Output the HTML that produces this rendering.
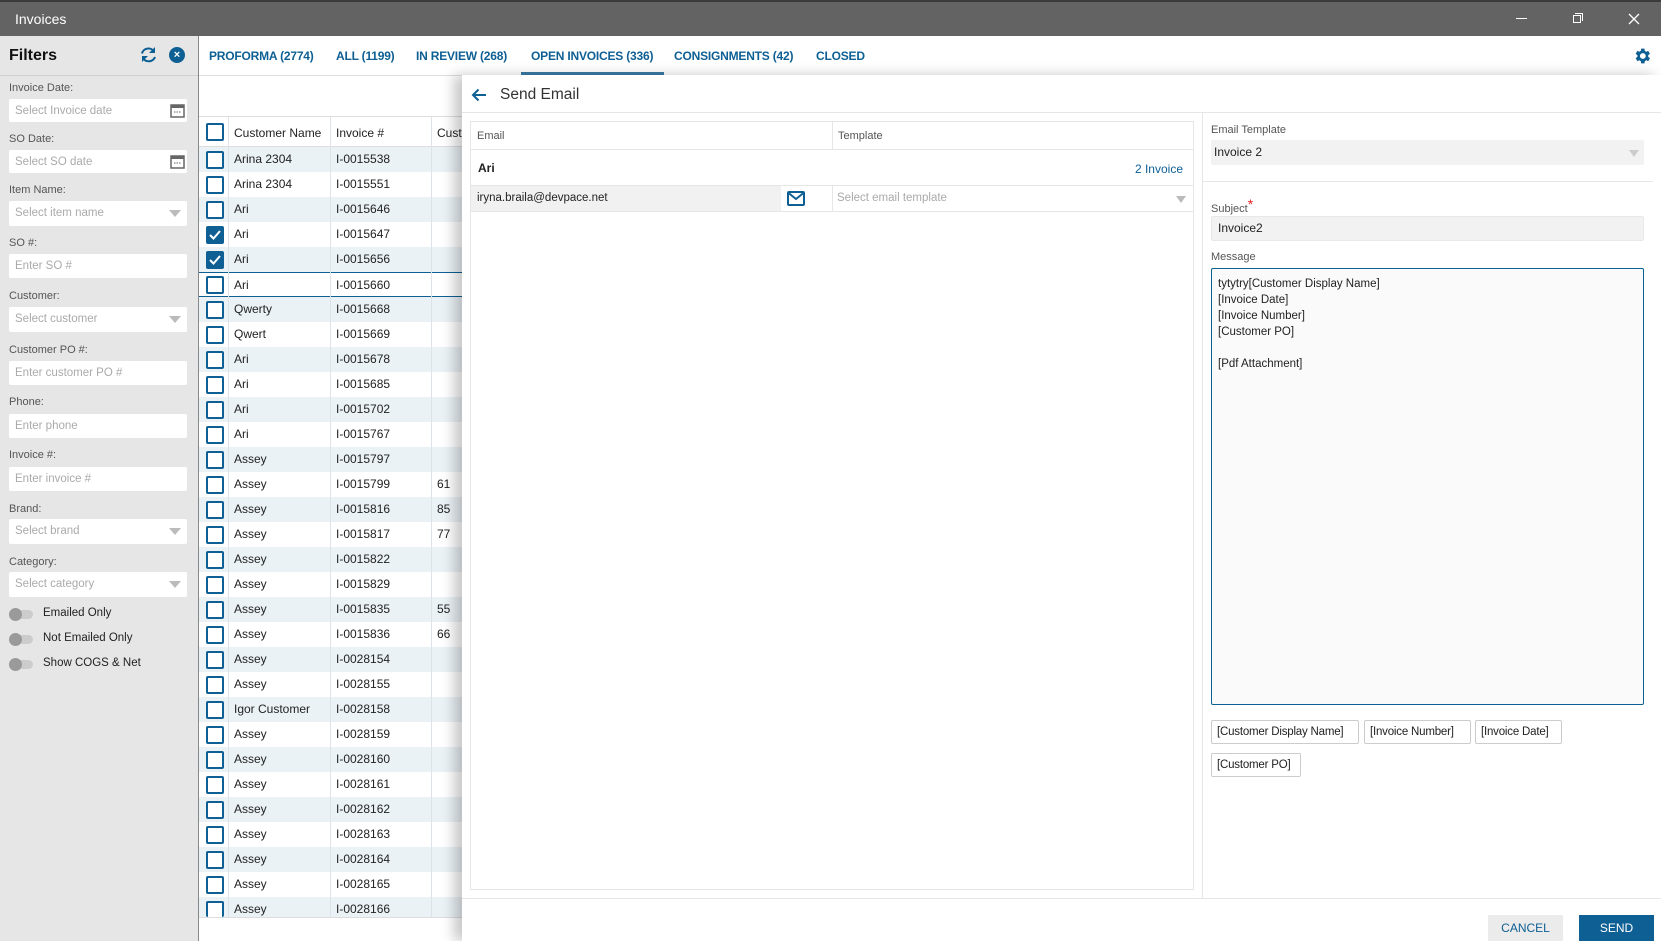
<!DOCTYPE html>
<html><head><meta charset="utf-8"><style>
*{box-sizing:border-box;margin:0;padding:0}
body{width:1661px;height:941px;position:relative;overflow:hidden;background:#fff;font-family:"Liberation Sans",sans-serif;font-size:12px;color:#222}
.a{position:absolute}
.lbl{position:absolute;left:9px;font-size:11px;color:#555}
.inp{position:absolute;left:9px;width:178px;height:24px;background:#fff;border-radius:2px;color:#aaa;font-size:11.5px;line-height:24px;padding-left:6px}
.dd:after{content:"";position:absolute;right:6px;top:9px;border-left:6px solid transparent;border-right:6px solid transparent;border-top:7px solid #bbb}
.tab{position:absolute;top:49px;font-size:12px;font-weight:bold;color:#0e5f93;white-space:nowrap;letter-spacing:-0.2px}
.row{position:absolute;left:199px;width:263px;height:25px;line-height:25px}
.row span{position:absolute}
.cb{position:absolute;left:206px;width:18px;height:18px;border:2px solid #0e5f93;border-radius:2px;background:#fff}
.cb.on{background:#0e5f93}
.tg{position:absolute;left:9px;width:24px;height:9px;border-radius:5px;background:#ccc}
.tg:before{content:"";position:absolute;left:0;top:-2px;width:13px;height:13px;border-radius:50%;background:#9a9a9a}
.tgl{position:absolute;left:43px;font-size:11.5px;color:#222}
.chip{position:absolute;height:24px;border:1px solid #ccc;border-radius:2px;line-height:22px;padding:0 5px;font-size:11.5px;background:#fff;white-space:nowrap;overflow:hidden;letter-spacing:-0.2px}
</style></head><body>
<div class="a" style="left:0;top:0;width:1661px;height:36px;background:#636363;border-top:2px solid #3a3a3a"></div>
<div class="a" style="left:15px;top:11px;color:#fff;font-size:14px">Invoices</div>
<div class="a" style="left:1516px;top:18px;width:11px;height:1px;background:#fff"></div>
<div class="a" style="left:1573px;top:15px;width:8px;height:8px;border:1px solid #fff"></div>
<div class="a" style="left:1575px;top:13px;width:8px;height:8px;border-top:1px solid #fff;border-right:1px solid #fff"></div>
<svg class="a" style="left:1628px;top:13px" width="12" height="12"><path d="M1 1L11 11M11 1L1 11" stroke="#fff" stroke-width="1.3"/></svg>

<div class="a" style="left:0;top:36px;width:199px;height:905px;background:#e6e6e6;border-right:1px solid #888"></div>
<div class="a" style="left:0;top:75px;width:198px;height:1px;background:#d0d0d0"></div>
<div class="a" style="left:9px;top:47px;font-size:16px;font-weight:bold;color:#111">Filters</div>
<svg class="a" style="left:139px;top:46px" width="19" height="17" viewBox="0 0 19 17"><path d="M3 7.5A6.5 6 0 0 1 15 5.5" fill="none" stroke="#0e5f93" stroke-width="2"/><path d="M16 11A6.5 6 0 0 1 4 12" fill="none" stroke="#0e5f93" stroke-width="2"/><path d="M16 1v6h-6z" fill="#0e5f93"/><path d="M3 16v-6h6z" fill="#0e5f93"/></svg>
<div class="a" style="left:169px;top:47px;width:16px;height:16px;border-radius:50%;background:#0e5f93;color:#fff;font-size:11px;line-height:16px;text-align:center;font-weight:bold">×</div>

<div class="lbl" style="top:82px">Invoice Date:</div>
<div class="inp" style="top:99px;height:23px">Select Invoice date</div>
<div class="lbl" style="top:133px">SO Date:</div>
<div class="inp" style="top:150px;height:23px">Select SO date</div>
<svg class="a" style="left:170px;top:103px" width="15" height="15"><rect x="1" y="2" width="13" height="12" fill="none" stroke="#666" stroke-width="1.5"/><rect x="1" y="2" width="13" height="3" fill="#666"/><path d="M4 9h7" stroke="#666" stroke-dasharray="1.5 1"/></svg>
<svg class="a" style="left:170px;top:154px" width="15" height="15"><rect x="1" y="2" width="13" height="12" fill="none" stroke="#666" stroke-width="1.5"/><rect x="1" y="2" width="13" height="3" fill="#666"/><path d="M4 9h7" stroke="#666" stroke-dasharray="1.5 1"/></svg>
<div class="lbl" style="top:184px">Item Name:</div>
<div class="inp dd" style="top:201px;height:25px;line-height:25px">Select item name</div>
<div class="lbl" style="top:237px">SO #:</div>
<div class="inp" style="top:254px">Enter SO #</div>
<div class="lbl" style="top:290px">Customer:</div>
<div class="inp dd" style="top:307px;height:25px;line-height:25px">Select customer</div>
<div class="lbl" style="top:344px">Customer PO #:</div>
<div class="inp" style="top:361px">Enter customer PO #</div>
<div class="lbl" style="top:396px">Phone:</div>
<div class="inp" style="top:414px">Enter phone</div>
<div class="lbl" style="top:449px">Invoice #:</div>
<div class="inp" style="top:467px">Enter invoice #</div>
<div class="lbl" style="top:503px">Brand:</div>
<div class="inp dd" style="top:519px;height:25px;line-height:25px">Select brand</div>
<div class="lbl" style="top:556px">Category:</div>
<div class="inp dd" style="top:572px;height:25px;line-height:25px">Select category</div>
<div class="tg" style="top:610px"></div><div class="tgl" style="top:607px">Emailed Only</div>
<div class="tg" style="top:635px"></div><div class="tgl" style="top:632px">Not Emailed Only</div>
<div class="tg" style="top:660px"></div><div class="tgl" style="top:657px">Show COGS &amp; Net</div>

<div class="tab" style="left:209px">PROFORMA (2774)</div>
<div class="tab" style="left:336px">ALL (1199)</div>
<div class="tab" style="left:416px">IN REVIEW (268)</div>
<div class="tab" style="left:531px">OPEN INVOICES (336)</div>
<div class="tab" style="left:674px">CONSIGNMENTS (42)</div>
<div class="tab" style="left:816px">CLOSED</div>
<div class="a" style="left:521px;top:72px;width:143px;height:3px;background:#3a7aa5"></div>
<div class="a" style="left:199px;top:75px;width:1462px;height:1px;background:#ddd"></div>
<svg class="a" style="left:1632px;top:46px" width="20" height="20" viewBox="0 0 24 24"><path fill="#0e5f93" d="M19.4 13a7.5 7.5 0 0 0 0-2l2.1-1.6-2-3.5-2.5 1a7.6 7.6 0 0 0-1.7-1L15 3.2h-4l-.4 2.7a7.6 7.6 0 0 0-1.7 1l-2.5-1-2 3.5L6.5 11a7.5 7.5 0 0 0 0 2l-2.1 1.6 2 3.5 2.5-1a7.6 7.6 0 0 0 1.7 1l.4 2.7h4l.4-2.7a7.6 7.6 0 0 0 1.7-1l2.5 1 2-3.5zM13 15.5a3.5 3.5 0 1 1 0-7 3.5 3.5 0 0 1 0 7z"/></svg>

<div class="a" style="left:199px;top:116px;width:263px;height:1px;background:#ddd"></div>
<div class="a" style="left:199px;top:117px;width:263px;height:30px;background:#fff;border-bottom:1px solid #ddd"></div>
<div class="cb" style="top:123px"></div>
<div class="a" style="left:234px;top:126px">Customer Name</div>
<div class="a" style="left:336px;top:126px">Invoice #</div>
<div class="a" style="left:437px;top:126px">Cust</div>
<div id="rows"></div>
<div class="a" style="left:228px;top:117px;width:1px;height:800px;background:#dde3e8"></div>
<div class="a" style="left:330px;top:117px;width:1px;height:800px;background:#dde3e8"></div>
<div class="a" style="left:431px;top:117px;width:1px;height:800px;background:#dde3e8"></div>
<div class="a" style="left:199px;top:917px;width:263px;height:1px;background:#ddd"></div>
<script>
var d=[["Arina 2304","I-0015538"],["Arina 2304","I-0015551"],["Ari","I-0015646"],["Ari","I-0015647"],["Ari","I-0015656"],["Ari","I-0015660"],["Qwerty","I-0015668"],["Qwert","I-0015669"],["Ari","I-0015678"],["Ari","I-0015685"],["Ari","I-0015702"],["Ari","I-0015767"],["Assey","I-0015797"],["Assey","I-0015799","61"],["Assey","I-0015816","85"],["Assey","I-0015817","77"],["Assey","I-0015822"],["Assey","I-0015829"],["Assey","I-0015835","55"],["Assey","I-0015836","66"],["Assey","I-0028154"],["Assey","I-0028155"],["Igor Customer","I-0028158"],["Assey","I-0028159"],["Assey","I-0028160"],["Assey","I-0028161"],["Assey","I-0028162"],["Assey","I-0028163"],["Assey","I-0028164"],["Assey","I-0028165"],["Assey","I-0028166"]];
var h="";
d.forEach(function(r,i){var t=147+i*25;var hgt=Math.min(25,917-t);
var bg=i%2==0?"#ebf2f6":"#fff";var bd=i==5?"border-top:1px solid #0e5f93;border-bottom:1px solid #0e5f93;":"";
h+='<div class="row" style="top:'+t+'px;height:'+hgt+'px;overflow:hidden;background:'+bg+';'+bd+'"><span style="left:35px">'+r[0]+'</span><span style="left:137px">'+r[1]+'</span>'+(r[2]?'<span style="left:238px">'+r[2]+'</span>':'')+'</div>';
if(t+4<917)h+='<div class="cb'+((i==3||i==4)?' on':'')+'" style="top:'+(t+4)+'px;height:'+Math.min(18,913-t)+'px'+(t+22>917?';border-bottom:none':'')+'">'+((i==3||i==4)?'<svg width="14" height="14" style="position:absolute;left:0;top:0"><path d="M2 7l3.5 3.5L12 3" stroke="#fff" stroke-width="2" fill="none"/></svg>':'')+'</div>';});
document.getElementById("rows").innerHTML=h;
</script>

<div class="a" style="left:462px;top:75px;width:1199px;height:866px;background:#fff;box-shadow:-8px 0 12px rgba(0,0,0,.22)"></div>
<svg class="a" style="left:471px;top:88px" width="16" height="14"><path d="M15 7H2M7.5 1.5L2 7l5.5 5.5" stroke="#0e5f93" stroke-width="2" fill="none"/></svg>
<div class="a" style="left:500px;top:86px;font-size:15.5px;color:#333">Send Email</div>
<div class="a" style="left:462px;top:112px;width:1199px;height:1px;background:#e6e6e6"></div>

<div class="a" style="left:470px;top:121px;width:724px;height:769px;border:1px solid #e6e6e6"></div>
<div class="a" style="left:471px;top:149px;width:722px;height:1px;background:#e6e6e6"></div>
<div class="a" style="left:832px;top:122px;width:1px;height:27px;background:#e6e6e6"></div>
<div class="a" style="left:477px;top:130px;font-size:11px;color:#555">Email</div>
<div class="a" style="left:838px;top:130px;font-size:11px;color:#555">Template</div>
<div class="a" style="left:478px;top:161px;font-weight:bold;font-size:12px">Ari</div>
<div class="a" style="left:1100px;top:162px;width:83px;text-align:right;color:#0e5f93;font-size:12px">2 Invoice</div>
<div class="a" style="left:471px;top:185px;width:722px;height:1px;background:#e6e6e6"></div>
<div class="a" style="left:471px;top:186px;width:310px;height:25px;background:#f1f1f1;line-height:25px;padding-left:6px;font-size:11.5px">iryna.braila@devpace.net</div>
<svg class="a" style="left:787px;top:191px" width="18" height="15"><rect x="1" y="1" width="16" height="13" rx="1" fill="none" stroke="#0e5f93" stroke-width="2"/><path d="M1.5 2l7.5 6 7.5-6" stroke="#0e5f93" stroke-width="2" fill="none"/></svg>
<div class="a" style="left:832px;top:186px;width:1px;height:25px;background:#e6e6e6"></div>
<div class="a" style="left:837px;top:192px;font-size:11.5px;color:#aaa">Select email template</div>
<div class="a" style="left:1176px;top:196px;border-left:5px solid transparent;border-right:5px solid transparent;border-top:7px solid #bbb"></div>
<div class="a" style="left:471px;top:211px;width:722px;height:1px;background:#e6e6e6"></div>

<div class="a" style="left:1202px;top:113px;width:1px;height:785px;background:#e6e6e6"></div>
<div class="a" style="left:1211px;top:124px;font-size:11px;color:#555">Email Template</div>
<div class="a" style="left:1211px;top:140px;width:433px;height:25px;background:#f2f2f2;border-radius:2px;line-height:25px;padding-left:3px;font-size:12px">Invoice 2</div>
<div class="a" style="left:1629px;top:150px;border-left:5px solid transparent;border-right:5px solid transparent;border-top:7px solid #ccc"></div>
<div class="a" style="left:1203px;top:181px;width:450px;height:1px;background:#e6e6e6"></div>
<div class="a" style="left:1211px;top:199px;font-size:11px;color:#555">Subject<span style="color:#e02020;font-size:14px;position:relative;top:-3px">*</span></div>
<div class="a" style="left:1211px;top:216px;width:433px;height:25px;background:#f2f2f2;border:1px solid #e8e8e8;border-radius:2px;line-height:23px;padding-left:6px;font-size:12px">Invoice2</div>
<div class="a" style="left:1211px;top:251px;font-size:11px;color:#555">Message</div>
<div class="a" style="left:1211px;top:268px;width:433px;height:437px;background:#fafafa;border:1px solid #0e5f93;border-radius:2px;padding:7px 6px;font-size:11.5px;line-height:16px;white-space:pre">tytytry[Customer Display Name]
[Invoice Date]
[Invoice Number]
[Customer PO]

[Pdf Attachment]</div>
<div class="chip" style="left:1211px;top:720px;width:148px">[Customer Display Name]</div>
<div class="chip" style="left:1364px;top:720px;width:107px">[Invoice Number]</div>
<div class="chip" style="left:1475px;top:720px;width:87px">[Invoice Date]</div>
<div class="chip" style="left:1211px;top:753px;width:90px">[Customer PO]</div>

<div class="a" style="left:462px;top:898px;width:1199px;height:1px;background:#e6e6e6"></div>
<div class="a" style="left:1488px;top:915px;width:75px;height:26px;background:#ebebeb;color:#0e5f93;text-align:center;line-height:26px;font-size:12px">CANCEL</div>
<div class="a" style="left:1579px;top:915px;width:75px;height:26px;background:#0e5f93;color:#fff;text-align:center;line-height:26px;font-size:12px">SEND</div>
</body></html>
